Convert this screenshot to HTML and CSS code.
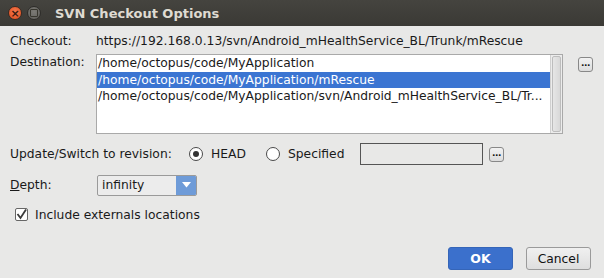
FILE: index.html
```html
<!DOCTYPE html>
<html lang="en">
<head>
    <meta charset="UTF-8">
    <title>SVN Checkout Options</title>
    <link rel="stylesheet" href="styles.css">
</head>
<body>

    <div class="titlebar">
        <span class="win-btn close">&times;</span>
        <span class="win-btn grey"><span class="square"></span></span>
        <span class="title">SVN Checkout Options</span>
    </div>

    <div class="dialog">
        <div class="row checkout-row">
            <span class="label">Checkout:</span>
            <span class="url">https://192.168.0.13/svn/Android_mHealthService_BL/Trunk/mRescue</span>
        </div>

        <div class="row dest-row">
            <span class="label">Destination:</span>
            <div class="listbox">
                <ul class="items">
                    <li>/home/octopus/code/MyApplication</li>
                    <li class="selected">/home/octopus/code/MyApplication/mRescue</li>
                    <li>/home/octopus/code/MyApplication/svn/Android_mHealthService_BL/Tr...</li>
                </ul>
                <div class="scrollbar"><div class="thumb"></div></div>
            </div>
            <span class="dots-btn dest-dots">...</span>
        </div>

        <div class="row rev-row">
            <span class="rev-label">Update/Switch to revision:</span>
            <label class="radio"><span class="circle checked"></span>HEAD</label>
            <label class="radio"><span class="circle"></span>Specified</label>
            <span class="textfield"></span>
            <span class="dots-btn">...</span>
        </div>

        <div class="row depth-row">
            <span class="label"><u>D</u>epth:</span>
            <div class="combo">
                <span class="combo-text">infinity</span>
                <span class="combo-arrow">
                    <svg width="9" height="6" viewBox="0 0 9 6"><polygon points="0,0 9,0 4.5,5.5" fill="#fff"/></svg>
                </span>
            </div>
        </div>

        <div class="row check-row">
            <span class="checkbox">
                <svg width="11" height="11" viewBox="0 0 11 11"><polyline points="1.5,5 4.5,9 10,0.5" fill="none" stroke="#3a3a3a" stroke-width="1.8"/></svg>
            </span>
            <span>Include externals locations</span>
        </div>

        <div class="footer">
            <button class="btn ok">OK</button>
            <button class="btn cancel">Cancel</button>
        </div>
    </div>

</body>
</html>
```

FILE: styles.css
```css
body {
    margin: 0;
    background: #e8e8e7;
    font-family: 'DejaVu Sans', sans-serif;
    font-size: 12.3px;
    color: #1a1a1a;
}

.titlebar {
    height: 26px;
    background: linear-gradient(to bottom, #45443f, #3a3935);
    display: flex;
    align-items: center;
    padding-left: 8px;
}

.win-btn {
    width: 14px;
    height: 14px;
    border-radius: 50%;
    display: flex;
    align-items: center;
    justify-content: center;
    margin-right: 5px;
    box-sizing: border-box;
}

.close {
    background: radial-gradient(circle at 50% 40%, #f57a4f, #df4b1c);
    color: #3a1a10;
    font-size: 11px;
    font-weight: bold;
    line-height: 1;
    border: 1px solid #3a2a22;
}

.grey {
    background: radial-gradient(circle at 50% 40%, #7c7b76, #5d5c58);
    border: 1px solid #2e2d2a;
}

.square {
    width: 6px;
    height: 6px;
    border: 1px solid #38372f;
    border-radius: 1px;
}

.title {
    margin-left: 9px;
    color: #dfdbd2;
    font-weight: bold;
    font-size: 13px;
}

.dialog {
    padding: 7px 10px 0 10px;
}

.row {
    display: flex;
    align-items: center;
}

.label {
    width: 86px;
    flex-shrink: 0;
}

.checkout-row {
    height: 16px;
}

.dest-row {
    align-items: flex-start;
    margin-top: 5px;
}

.dest-row .label {
    padding-top: 1px;
}

.listbox {
    width: 467px;
    height: 80px;
    box-sizing: border-box;
    border: 1px solid #a9a9a9;
    background: #fff;
    display: flex;
}

.items {
    list-style: none;
    margin: 0;
    padding: 0;
    flex: 1;
    min-width: 0;
}

.items li {
    height: 16.5px;
    line-height: 16.5px;
    padding-left: 1px;
    white-space: nowrap;
    overflow: hidden;
}

.items li.selected {
    background: #3b75d2;
    color: #fff;
}

.scrollbar {
    width: 12px;
    flex-shrink: 0;
    border-left: 1px solid #d0d0d0;
    background: #ececec;
    padding: 1px;
    box-sizing: border-box;
}

.thumb {
    height: 100%;
    border: 1px solid #bdbdbd;
    border-radius: 2px;
    box-sizing: border-box;
    background: linear-gradient(to right, #e6e6e6, #d8d8d8);
}

.dots-btn {
    width: 15px;
    height: 15px;
    box-sizing: border-box;
    border: 1px solid #888;
    border-radius: 3px;
    background: linear-gradient(to bottom, #f2f2f2, #dcdcdc);
    font-size: 9px;
    font-weight: bold;
    line-height: 11px;
    text-align: center;
    color: #111;
    letter-spacing: -0.5px;
}

.dest-dots {
    margin-left: 15px;
    margin-top: 3px;
}

.rev-row {
    margin-top: 9px;
    height: 22px;
}

.rev-label {
    width: 179px;
    flex-shrink: 0;
}

.radio {
    display: flex;
    align-items: center;
}

.radio:first-of-type {
    width: 77px;
}

.radio:last-of-type {
    width: 94px;
}

.circle {
    width: 14px;
    height: 14px;
    box-sizing: border-box;
    border: 1px solid #4a4a4a;
    border-radius: 50%;
    background: #fff;
    margin-right: 8px;
    display: flex;
    align-items: center;
    justify-content: center;
}

.circle.checked::after {
    content: "";
    width: 6px;
    height: 6px;
    border-radius: 50%;
    background: #333;
}

.textfield {
    width: 123px;
    height: 22px;
    box-sizing: border-box;
    border: 1px solid #555;
    background: #e8e8e7;
    margin-right: 6px;
}

.depth-row {
    margin-top: 9px;
    height: 22px;
}

.combo {
    margin-left: 1px;
    width: 100px;
    height: 21px;
    box-sizing: border-box;
    border: 1px solid #9a9a9a;
    border-radius: 2px;
    display: flex;
    background: #ececec;
    overflow: hidden;
}

.combo-text {
    flex: 1;
    padding-left: 4px;
    line-height: 19px;
}

.combo-arrow {
    width: 20px;
    background: #6e9bd8;
    display: flex;
    align-items: center;
    justify-content: center;
}

.check-row {
    margin-top: 10px;
    padding-left: 5px;
    height: 17px;
}

.checkbox {
    width: 13px;
    height: 13px;
    box-sizing: border-box;
    border: 1px solid #666;
    border-radius: 2px;
    background: #fff;
    margin-right: 7px;
    display: flex;
    align-items: center;
    justify-content: center;
}

.footer {
    display: flex;
    justify-content: flex-end;
    gap: 13px;
    margin-top: 24px;
    padding-right: 3px;
}

.btn {
    width: 65px;
    height: 23px;
    font-family: 'DejaVu Sans', sans-serif;
    font-size: 12.3px;
    border-radius: 3px;
    padding: 0;
}

.ok {
    background: #3b70cc;
    border: 1px solid #3565b8;
    color: #fff;
    font-weight: bold;
    font-size: 12.5px;
}

.cancel {
    background: linear-gradient(to bottom, #f0f0f0, #dedede);
    border: 1px solid #9a9a9a;
    color: #111;
}
```
